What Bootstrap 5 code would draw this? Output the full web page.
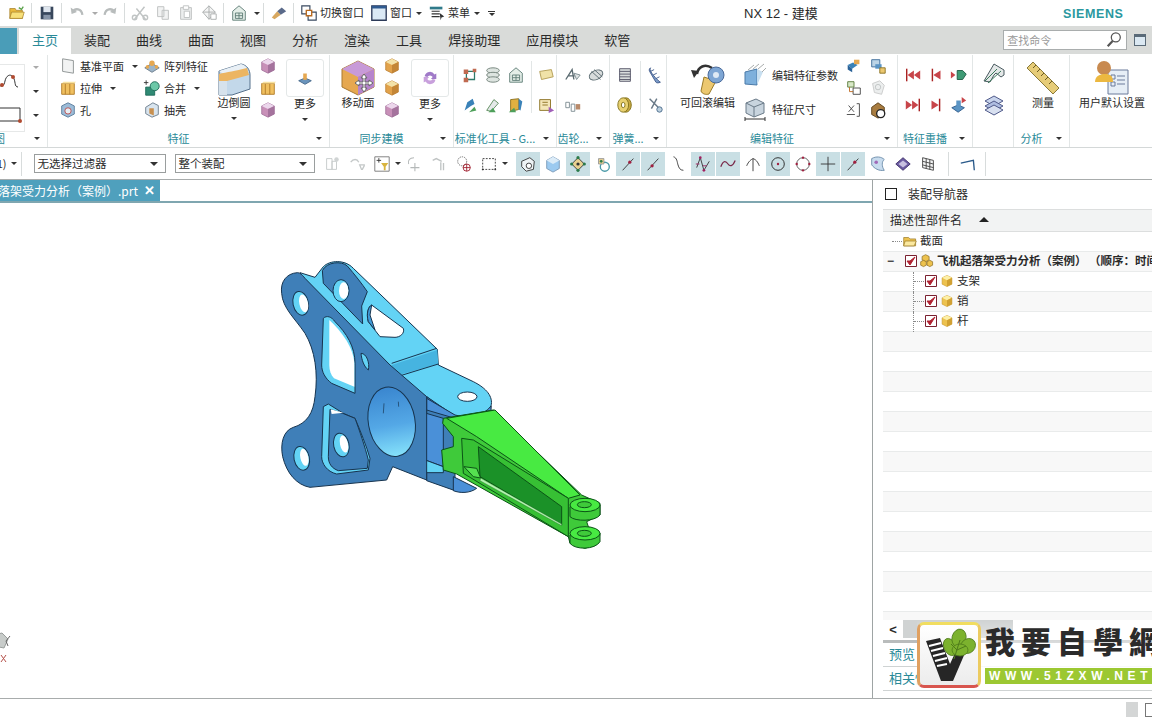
<!DOCTYPE html>
<html lang="zh-CN">
<head>
<meta charset="UTF-8" />
<title>NX 12 - 建模</title>
<link href="https://cdn.jsdelivr.net/npm/bootstrap@5.3.2/dist/css/bootstrap.min.css" rel="stylesheet" />
<style>
  html, body { height: 720px; overflow: hidden; }
  body { font-family: "Noto Sans CJK SC", "Liberation Sans", sans-serif; font-size: 11px; color: #2a2a2a; background: #fff; line-height: 1; }
  svg { display: block; flex: none; }
  .ic { width: 18px; height: 18px; }
  .ic-lg { width: 36px; height: 36px; }
  .ic-mid { width: 24px; height: 24px; }
  .tint-b { --a: #bcd8ee; --b: #5b94c8; --c: #2f6ea8; }
  .tint-o { --a: #f3e2a8; --b: #e2a24a; --c: #b97c30; }
  .tint-p { --a: #ecd7ec; --b: #c890b8; --c: #9a6a94; }
  .tint-g { --a: #e4e6e6; --b: #b6bcbc; --c: #8c9494; }
  .tint-y { --a: #fdf0a8; --b: #edc24e; --c: #c8952a; }

  .title-bar { height: 26px; padding-left: 5px; flex: none; }
  .qb { width: 23px; height: 24px; display: flex; align-items: center; justify-content: center; flex: none; }
  .qsep { width: 1px; height: 20px; background: #d8dcdc; margin: 0 3px; flex: none; }
  .cr { width: 0; height: 0; border-left: 3px solid transparent; border-right: 3px solid transparent; border-top: 3px solid #333; flex: none; }
  .cr-l { border-top-color: #aaa; }
  .qt { font-size: 11px; white-space: nowrap; flex: none; padding-bottom: 2px; }
  .more-ln { width: 7px; border-top: 1px solid #333; padding-top: 1px; margin-left: 8px; display: flex; justify-content: center; flex: none; }
  .app-name { font-family: "Liberation Sans", "Noto Sans CJK SC", sans-serif; font-size: 13px; width: 74px; margin-left: 249px; white-space: nowrap; flex: none; }
  .brand { font-family: "Liberation Sans", sans-serif; font-weight: 700; font-size: 12.5px; letter-spacing: .6px; color: #2a98a0; margin-left: 245px; margin-top: 3px; flex: none; }

  .tab-bar { height: 28px; background: #d9dbd9; flex: none; }
  .blue-tab { width: 17px; height: 26px; margin-top: 2px; background: #4a9db8; margin-right: 2px; flex: none; }
  .rtab { padding: 0 13px 3px; font-size: 13px; height: 26px; margin-top: 2px; flex: none; }
  .rtab-on { background: #fff; color: #2a8a98; }
  .find-box { width: 124px; height: 20px; background: #fff; border: 1px solid #a9adad; padding: 0 3px; color: #9a9a9a; margin-left: 360px; flex: none; }
  .win-btn { width: 12px; height: 12px; border: 1px solid #5a6a78; border-top-width: 3px; background: #dbe8f2; margin-left: 7px; flex: none; }

  .ribbon { height: 94px; border-bottom: 1px solid #d4d8d8; flex: none; }
  .rg { display: flex; flex-direction: column; flex: none; border-right: 1px solid #e2e6e6; height: 92px; margin-top: 1px; }
  .rg-body { flex: 1; display: flex; min-height: 0; }
  .rg-foot { height: 16px; margin-bottom: 1px; display: flex; align-items: center; color: #2a8a98; font-size: 11px; white-space: nowrap; overflow: hidden; flex: none; }
  .rg-foot span { flex: 1; text-align: center; }
  .rg-foot i { width: 20px; display: flex; justify-content: center; flex: none; }
  .foot-clip { margin-left: -6px; flex: none !important; }
  .foot-fill { flex: 1; }
  .rw3 { height: 22px; display: flex; align-items: center; white-space: nowrap; }
  .rw3 .ic { margin-right: 3px; }
  .stack3 { display: flex; flex-direction: column; flex: none; }
  .stack2 { display: flex; flex-direction: column; padding-top: 5px; flex: none; }
  .stack34 { display: flex; flex-direction: column; padding-top: 3px; flex: none; }
  .rw34 { height: 34px; display: flex; align-items: center; white-space: nowrap; }
  .rw34 svg { margin-right: 5px; }
  .rw2 { height: 30px; display: flex; align-items: center; justify-content: center; width: 23px; }
  .bigb { display: flex; flex-direction: column; align-items: center; padding-top: 5px; white-space: nowrap; flex: none; }
  .bigb b { font-weight: 400; height: 14px; margin-top: -1px; line-height: 14px; }
  .bigb .cr { margin-top: 8px; }
  .more-box { width: 38px; height: 38px; border: 1px solid #e4e8e8; border-radius: 3px; display: flex; align-items: center; justify-content: center; margin-top: -1px; }
  .vs { width: 1px; height: 52px; background: #e2e6e6; margin: 6px 2px 0 4px; flex: none; }
  .sk-frame { width: 25px; height: 68px; border: 1px solid #e6e8e8; border-left: 0; margin-top: 9px; display: flex; flex-direction: column; justify-content: space-around; overflow: hidden; flex: none; }
  .sk-arrows { width: 20px; display: flex; flex-direction: column; align-items: center; padding-top: 11px; gap: 21px; margin-left: 1px; }
  .w-11 { margin-left: 11px; } .w-10 { margin-left: 10px; } .w-7 { margin-left: 7px; } .w-6 { margin-left: 6px; }
  .w-3 { margin-left: 3px; } .w-13 { margin-left: 13px; } .w-8 { margin-left: 8px; } .w-9 { margin-left: 9px; }

  .sel-bar { height: 32px; border-bottom: 1px solid #a8acac; flex: none; }
  .clip-txt { margin-left: -7px; font-size: 11px; flex: none; }
  .combo { height: 19px; border: 1px solid #9a9e9e; padding: 0 3px; font-size: 11.5px; display: flex; align-items: center; justify-content: space-between; background: #fff; flex: none; }
  .combo .cr { border-left-width: 4px; border-right-width: 4px; border-top-width: 4px; margin-right: 4px; }
  .combo-a { width: 132px; margin-left: 10px; }
  .combo-b { width: 140px; margin: 0 5px 0 9px; }
  .sb { width: 24px; height: 24px; margin-right: 1px; display: flex; align-items: center; justify-content: center; flex: none; }
  .sb-on { background: #c9dfe4; }
  .sb-w { width: 7px; margin-right: 0; }
  .sb-gap { width: 7px; flex: none; }
  .sb-sep { width: 1px; height: 24px; background: #d8dcdc; margin: 0 7px; flex: none; }
  .sb-sep0 { width: 1px; height: 24px; background: #d8dcdc; margin: 0 2px 0 4px; flex: none; }

  .main-row { height: 518px; flex: none; }
  .view-wrap { width: 873px; border-right: 1px solid #9ea4a4; height: 518px; flex: none; }
  .doc-tabs { height: 23px; border-bottom: 2px solid #7fa6b0; flex: none; }
  .doc-tab { width: 160px; height: 21px; background: #4fa0bd; color: #fff; font-size: 12px; padding-right: 5px; white-space: nowrap; overflow: hidden; }
  .doc-tab span { flex: none; }
  .doc-x { margin-left: 6px; font-family: "Liberation Sans", sans-serif; font-weight: 700; font-size: 13px; }
  .canvas-area { position: relative; flex: 1; }
  .part { position: absolute; left: 260px; top: 47px; width: 360px; height: 310px; }
  .triad { position: absolute; left: 0; top: 428px; width: 14px; height: 34px; }

  .nav-panel { width: 279px; height: 518px; padding-left: 10px; flex: none; }
  .nav-head { height: 29px; font-size: 12px; flex: none; padding-bottom: 1px; }
  .nav-square { width: 12px; height: 12px; border: 1px solid #222; margin: 0 11px 0 2px; flex: none; }
  .col-head { height: 23px; background: #f2f3f3; border-top: 1px solid #dcdede; border-bottom: 1px solid #dcdede; font-size: 12px; padding: 0 0 2px 7px; flex: none; }
  .tri-up { width: 0; height: 0; border-left: 5px solid transparent; border-right: 5px solid transparent; border-bottom: 5px solid #222; margin-left: 17px; flex: none; }
  .tree { height: 388px; background: repeating-linear-gradient(#fff 0 19px, #e9ebeb 19px 20px, #f8f8f8 20px 39px, #e9ebeb 39px 40px); overflow: hidden; flex: none; }
  .tree-row { height: 20px; font-size: 11.5px; white-space: nowrap; padding-bottom: 2px; }
  .tree-row .ic { width: 14px; height: 14px; margin-right: 3px; }
  .ck { width: 12px; height: 12px; margin-right: 3px; }
  .lvl-0 { margin-left: 9px; }
  .lvl-1 { padding-left: 4px; }
  .lvl-2 { margin-left: 30px; border-left: 1px dotted #8a8a8a; }
  .dot-h { border-top: 1px dotted #8a8a8a; flex: none; width: 10px; margin-right: 1px; }
  .tree-exp { font-size: 12px; width: 18px; color: #444; font-family: "Liberation Sans", sans-serif; flex: none; }
  .hscroll { height: 18px; background: #fff; flex: none; }
  .hscroll-btn { width: 20px; font-family: "Liberation Sans", sans-serif; font-weight: 700; font-size: 13px; text-align: center; }
  .hscroll-thumb { width: 110px; height: 18px; background: #d0d3d3; }
  .split-line { height: 3px; background: #b9bcbc; margin-top: 2px; flex: none; }
  .acc-row { height: 24px; border-bottom: 1px solid #cfd3d3; color: #2a8a98; font-size: 13px; padding: 0 0 2px 6px; flex: none; }

  .status-bar { height: 22px; border-top: 1px solid #a8acac; justify-content: flex-end; flex: none; }
  .st-chip { width: 12px; height: 15px; background: #d4d6d6; margin-right: 7px; }
  .st-win { width: 7px; height: 14px; border: 1px solid #777; border-right: 0; }

  .wm { position: absolute; left: 917px; top: 620px; width: 235px; height: 70px; overflow: hidden; background: linear-gradient(#ffffff00 0, #ffffffdd 60%); }
  .wm-logo { width: 64px; height: 66px; border-radius: 7px; border: 3px solid; border-color: #f1dd60 #eccb60 #d8554e #e0a060; background: linear-gradient(#fff, #ececec); margin-top: 2px; flex: none; }
  .wm-text { font-family: "Noto Sans CJK TC", sans-serif; font-weight: 900; font-size: 30px; letter-spacing: 6px; color: #2b2b2b; line-height: 36px; height: 40px; white-space: nowrap; margin-left: 4px; padding-top: 2px; }
  .wm-url { background: #9cc832; height: 16px; margin: 8px 0 0 4px; color: #fff; font-family: "Liberation Sans", sans-serif; font-weight: 700; font-size: 12px; letter-spacing: 4.6px; line-height: 16px; padding-left: 4px; white-space: nowrap; }
</style>
</head>
<body>

<svg width="0" height="0" class="position-absolute">
  <defs>
    <symbol id="cube" viewBox="0 0 20 20"><path d="M10 2l7 3.5v9L10 18l-7-3.5v-9z" fill="var(--b)" stroke="var(--c)" stroke-width=".8"/><path d="M10 2l7 3.5L10 9 3 5.5z" fill="var(--a)"/><path d="M10 9l7-3.5v9L10 18z" fill="var(--c)" opacity=".75"/></symbol>
    <symbol id="folder" viewBox="0 0 20 20"><path d="M2 5h6l1 2h7v9H2z" fill="#e9b93c" stroke="#a6802a" stroke-width=".8"/><path d="M4 9h14l-2 7H2z" fill="#f7e07a" stroke="#a6802a" stroke-width=".8"/><path d="M12 4l3 2 2-3" fill="none" stroke="#5aa24a" stroke-width="1.5"/></symbol>
    <symbol id="save" viewBox="0 0 20 20"><path d="M3 3h14v14H3z" fill="#38475c"/><path d="M6 3h8v6H6z" fill="#dfe6ee"/><path d="M6 12h8v5H6z" fill="#8795a8"/></symbol>
    <symbol id="undo" viewBox="0 0 20 20"><path d="M5 9c3-5 10-4 11 3" fill="none" stroke="#b8bcbc" stroke-width="2.5"/><path d="M3 4l1 7 6-2z" fill="#b8bcbc"/></symbol>
    <symbol id="redo" viewBox="0 0 20 20"><path d="M15 9c-3-5-10-4-11 3" fill="none" stroke="#b8bcbc" stroke-width="2.5"/><path d="M17 4l-1 7-6-2z" fill="#b8bcbc"/></symbol>
    <symbol id="cut" viewBox="0 0 20 20"><path d="M4 17L15 3M16 17L6 5" stroke="#c0c4c4" stroke-width="1.6" fill="none"/><circle cx="4" cy="15" r="2.5" fill="none" stroke="#c0c4c4" stroke-width="1.5"/><circle cx="16" cy="15" r="2.5" fill="none" stroke="#c0c4c4" stroke-width="1.5"/></symbol>
    <symbol id="copy" viewBox="0 0 20 20"><path d="M4 3h7v11H4zM9 7h7v10H9z" fill="#f2f3f3" stroke="#bcc0c0"/></symbol>
    <symbol id="paste" viewBox="0 0 20 20"><path d="M4 4h12v13H4z" fill="#eceeee" stroke="#bcc0c0"/><path d="M7 2h6v4H7zM8 8h6v7H8z" fill="#fff" stroke="#bcc0c0"/></symbol>
    <symbol id="touch" viewBox="0 0 20 20"><path d="M10 2l7 7-7 8-7-8z" fill="#f4f5f5" stroke="#a8acac"/><path d="M10 2v15M3 9h14" stroke="#a8acac"/><path d="M12 11h6v6h-6z" fill="#fff" stroke="#a8acac"/></symbol>
    <symbol id="gridbox" viewBox="0 0 20 20"><path d="M3 8l7-6 7 6v10H3z" fill="#e4eee8" stroke="#5c7a74"/><path d="M6 10h8v6H6zM10 10v6M6 13h8" fill="none" stroke="#5c7a74"/></symbol>
    <symbol id="wand" viewBox="0 0 20 20"><path d="M2 15l6-7 4 4-7 5z" fill="#d8a860"/><path d="M8 8l5-4 5 4-6 4z" fill="#5a6a8a"/></symbol>
    <symbol id="split" viewBox="0 0 20 20"><path d="M2 2h9v9H2zM9 9h9v9H9z" fill="#fff" stroke="#3a4a60" stroke-width="1.3"/><path d="M7 7h6v6H7z" fill="#fff" stroke="#b86a20" stroke-width="1.5"/></symbol>
    <symbol id="win" viewBox="0 0 20 20"><path d="M2 2h16v16H2z" fill="#dbe9f5" stroke="#2c3a58" stroke-width="1.5"/><path d="M2 2h16v3H2z" fill="#2f5a90"/></symbol>
    <symbol id="menu" viewBox="0 0 20 20"><path d="M2 3h14v3H2z" fill="#2f7a8a"/><path d="M4 8h9M4 11h9M4 14h9" stroke="#333" stroke-width="1.2"/><path d="M13 10l5 4-3 1-1 3z" fill="#333"/></symbol>
    <symbol id="plane" viewBox="0 0 20 20"><path d="M4 2l12 2v14L4 16z" fill="#f2f3f3" stroke="#8a9090"/></symbol>
    <symbol id="extrude" viewBox="0 0 20 20"><path d="M3 5h14v12H3z" fill="#f0c060" stroke="#b07a28"/><path d="M7 5v12M12 5v12" stroke="#b07a28"/><path d="M3 5l2-2h14l-2 2z" fill="#f8e2a0"/></symbol>
    <symbol id="hole" viewBox="0 0 20 20"><path d="M10 2l7 3.5v9L10 18l-7-3.5v-9z" fill="#9cbcd8" stroke="#5a7a9a"/><circle cx="10" cy="11" r="3.5" fill="#e8eef4" stroke="#b84a4a"/></symbol>
    <symbol id="pattern" viewBox="0 0 20 20"><path d="M2 12l8-5 8 5-8 5z" fill="#9cb4c8" stroke="#6a7a8a"/><circle cx="10" cy="7" r="3" fill="#e6a850"/><circle cx="5" cy="11" r="2" fill="#e6a850"/><circle cx="15" cy="11" r="2" fill="#e6a850"/></symbol>
    <symbol id="unite" viewBox="0 0 20 20"><path d="M3 9h10v9H3z" fill="#2f8a74" stroke="#1e6a58"/><circle cx="13" cy="8" r="5" fill="#6cc8a8" stroke="#1e6a58"/><path d="M1 4h5M3.5 1.5v5" stroke="#333"/></symbol>
    <symbol id="shell" viewBox="0 0 20 20"><path d="M3 7l8-5 6 3v10l-7 3-7-4z" fill="#d8e4ee" stroke="#6a7a8a"/><path d="M7 8h5v8l-5-2z" fill="#c89050"/></symbol>
    <symbol id="blend" viewBox="0 0 36 36"><path d="M3 11l22-7c6 1 9 6 9 11v14L16 35H3z" fill="#c3d8ea" stroke="#54708c"/><path d="M3 11l22-7c3 1 5 2 6 5L9 15z" fill="#e9f0f6"/><path d="M3 14c8-2 16-3 28-6l2 7-22 6H3z" fill="#ecb562"/><path d="M3 21h8v14H3z" fill="#d6e2ec"/></symbol>
    <symbol id="stamp" viewBox="0 0 20 20"><path d="M3 13l7-3 7 3-7 4z" fill="#6a94bc" stroke="#45688a"/><path d="M8 5h4v7H8z" fill="#e6a850"/></symbol>
    <symbol id="movef" viewBox="0 0 36 36"><path d="M18 1l16 8v18l-16 8-16-8V9z" fill="#e6a850" stroke="#a87830"/><path d="M18 1l16 8-16 8L2 9z" fill="#c89ad8"/><path d="M18 17l16-8v18l-16 8z" fill="#b684cc"/><path d="M24 14l3 4h-2v4h4v-2l4 3-4 3v-2h-4v4h2l-3 4-3-4h2v-4h-4v2l-4-3 4-3v2h4v-4h-2z" fill="#fff" stroke="#666"/></symbol>
    <symbol id="syncm" viewBox="0 0 20 20"><path d="M4 8a6 6 0 0 1 11-2l2-1v6h-6l2-2a3.5 3.5 0 0 0-6 0z" fill="#a07ac8"/><path d="M16 12a6 6 0 0 1-11 2l-2 1V9h6l-2 2a3.5 3.5 0 0 0 6 0z" fill="#c8a0dc"/></symbol>
    <symbol id="nodes" viewBox="0 0 20 20"><path d="M6 6h9v9H6z" fill="none" stroke="#2f7a6a" stroke-width="1.4"/><path d="M3 4h5v5H3zM13 3h4v4h-4zM3 13h5v5H3z" fill="#c06a50"/></symbol>
    <symbol id="layers" viewBox="0 0 20 20"><ellipse cx="10" cy="5" rx="7" ry="3" fill="#dde4e0" stroke="#708078"/><ellipse cx="10" cy="10" rx="7" ry="3" fill="#dde4e0" stroke="#708078"/><ellipse cx="10" cy="15" rx="7" ry="3" fill="#dde4e0" stroke="#708078"/></symbol>
    <symbol id="label" viewBox="0 0 20 20"><path d="M3 6l13-2 2 8-13 3z" fill="#f0e2a8" stroke="#b09a50"/></symbol>
    <symbol id="bluetool" viewBox="0 0 20 20"><path d="M4 16l3-9 6-4 2 6-4 2z" fill="#3a82b8"/><path d="M9 18l6-6 2 4z" fill="#4ea05a"/></symbol>
    <symbol id="greentool" viewBox="0 0 20 20"><path d="M3 16l8-12 5 4-8 9z" fill="#e4e8e8" stroke="#5a8a5a"/><path d="M5 18l5-5 3 5z" fill="#4ea05a"/></symbol>
    <symbol id="yb" viewBox="0 0 20 20"><path d="M4 4l9-1v12l-9 2z" fill="#e0b040" stroke="#8a7020"/><path d="M13 3l4 3-2 10-2-1z" fill="#3a82b8"/><path d="M2 18l6-5 2 5z" fill="#4ea05a"/></symbol>
    <symbol id="mix" viewBox="0 0 20 20"><path d="M3 4h12v12H3z" fill="#f4e6b8" stroke="#8a7020"/><path d="M6 7h6M6 10h6" stroke="#8a7020"/><path d="M13 12l6 4-6 3z" fill="#a060b8"/></symbol>
    <symbol id="a-script" viewBox="0 0 20 20"><path d="M2 15L9 4l2 11M5 11h7" fill="none" stroke="#5a6a70" stroke-width="1.5"/><path d="M11 8l7 2-4 5z" fill="#dfe4e4" stroke="#7a8a90"/></symbol>
    <symbol id="gear-tilt" viewBox="0 0 20 20"><ellipse cx="10" cy="10" rx="8" ry="5" transform="rotate(-25 10 10)" fill="#d8dcdc" stroke="#5a6a70"/><path d="M5 6l10 9M8 4l9 8" stroke="#5a6a70"/></symbol>
    <symbol id="pinset" viewBox="0 0 20 20"><path d="M2 7h4v6H2zM8 9h4v8H8z" fill="none" stroke="#7a8a90"/><path d="M13 9h5v6h-5z" fill="#b88a6a"/></symbol>
    <symbol id="spring" viewBox="0 0 20 20"><path d="M4 3h12v14H4z" fill="#d8dcdc" stroke="#556"/><path d="M4 6h12M4 9h12M4 12h12M4 15h12" stroke="#556"/></symbol>
    <symbol id="spring2" viewBox="0 0 20 20"><path d="M5 2c-3 3 8 14 11 16-2 1-4 1-5 0L4 6c-1-2 0-3 1-4z" fill="#7a9ac8" stroke="#405a8a"/><path d="M5 6l4-2M8 10l4-2M11 14l4-2" stroke="#405a8a"/></symbol>
    <symbol id="washer" viewBox="0 0 20 20"><ellipse cx="11" cy="10" rx="6" ry="8" fill="#c8a840" stroke="#80701a"/><ellipse cx="8" cy="10" rx="6" ry="8" fill="#e8d070" stroke="#80701a"/><ellipse cx="8" cy="10" rx="2" ry="3" fill="#fff" stroke="#80701a"/></symbol>
    <symbol id="snips" viewBox="0 0 20 20"><path d="M4 3l12 12M12 3L6 14" stroke="#6a7a88" stroke-width="1.6" fill="none"/><circle cx="15" cy="15" r="3" fill="#bcd0de" stroke="#4a6a8a"/></symbol>
    <symbol id="rollback" viewBox="0 0 36 36"><path d="M22 8c-7-5-14-1-15 6" fill="none" stroke="#333" stroke-width="2.5"/><path d="M1 10l8 1-5 7z" fill="#333"/><path d="M14 17l12 4-7 13c-3 1-7 0-8-3z" fill="#ecc870" stroke="#9a7a28"/><circle cx="26" cy="15" r="8" fill="#7ea6d4" stroke="#4a6a9a"/><circle cx="26" cy="15" r="3" fill="#dfeaf5"/></symbol>
    <symbol id="editpar" viewBox="0 0 24 24"><path d="M2 9l12-3v16L2 21z" fill="#7eb0dc" stroke="#4a7aa8"/><path d="M14 6l6 3-6 13z" fill="#c8dff0"/><path d="M5 7l6-5M10 6l6-5M15 6l6-5M19 9l4-4" stroke="#a8acac"/></symbol>
    <symbol id="editdim" viewBox="0 0 24 24"><path d="M3 6l10-4 8 4v10l-10 4-8-4z" fill="#c8d4de" stroke="#6a7a88"/><path d="M11 10l10-4M11 10v10M3 6l8 4" stroke="#6a7a88"/><path d="M2 22h20M2 20v4M22 20v4" stroke="#333"/></symbol>
    <symbol id="chain" viewBox="0 0 20 20"><path d="M3 9l6-3 5 3-6 4z" fill="#3a82b8"/><path d="M3 9v5l5 3v-4z" fill="#2a6298"/><path d="M10 3h6v5h-6z" fill="#e6a850"/></symbol>
    <symbol id="chainlk" viewBox="0 0 20 20"><path d="M3 3h9v8H3z" fill="#bcd4e6" stroke="#3a6a98"/><path d="M7 8h7v5H7z" fill="#5a94c4"/><path d="M12 12h6v6h-6z" fill="#ecc870" stroke="#8a7020"/></symbol>
    <symbol id="frames" viewBox="0 0 20 20"><path d="M3 3h7v6H3z" fill="#d8e8c8" stroke="#5a7a3a"/><path d="M9 10h8v7H9z" fill="#fff" stroke="#444"/><path d="M5 9v5h4" fill="none" stroke="#c06a20"/></symbol>
    <symbol id="ghost" viewBox="0 0 20 20"><path d="M4 5l8-3 5 5-3 10-8-2z" fill="#eceeee" stroke="#c8caca"/><circle cx="10" cy="9" r="3" fill="none" stroke="#c0c4c4"/></symbol>
    <symbol id="xdim" viewBox="0 0 20 20"><path d="M4 5l6 7M10 5l-6 7M2 15h9M13 3h3v14h-3" fill="none" stroke="#444"/></symbol>
    <symbol id="brownc" viewBox="0 0 20 20"><path d="M3 7l7-5 7 5v8l-7 4-7-4z" fill="#a87c40" stroke="#5a4018"/><circle cx="13" cy="14" r="4.5" fill="#fff" stroke="#222" stroke-width="1.5"/></symbol>
    <symbol id="rwd2" viewBox="0 0 20 20"><path d="M3 3v14" stroke="#a22" stroke-width="1.6"/><path d="M11 5v10L4 10zM18 5v10l-7-5z" fill="#c8454a"/></symbol>
    <symbol id="rwd1" viewBox="0 0 20 20"><path d="M6 3v14" stroke="#a22" stroke-width="1.6"/><path d="M15 5v10L7 10z" fill="#c8454a"/></symbol>
    <symbol id="fwdb" viewBox="0 0 20 20"><path d="M1 6v8l5-4z" fill="#c8454a"/><path d="M8 5h6l4 4-4 6H8z" fill="#3e9a74" stroke="#1e5a44"/></symbol>
    <symbol id="fwd2" viewBox="0 0 20 20"><path d="M17 3v14" stroke="#a22" stroke-width="1.6"/><path d="M2 5v10l7-5zM9 5v10l7-5z" fill="#c8454a"/></symbol>
    <symbol id="fwd1" viewBox="0 0 20 20"><path d="M14 3v14" stroke="#a22" stroke-width="1.6"/><path d="M5 5v10l8-5z" fill="#c8454a"/></symbol>
    <symbol id="fwdc" viewBox="0 0 20 20"><path d="M2 13l7-3 7 3-7 5z" fill="#5a94c4" stroke="#2f5a8a"/><path d="M7 5h5v7H7z" fill="#5a94c4"/><path d="M13 1v7l5-3z" fill="#c8454a"/></symbol>
    <symbol id="rule1" viewBox="0 0 24 24"><path d="M12 1l10 6v5l-3 2-5-4-2 2-4 7-6-1z" fill="#e4e8e8" stroke="#4a5a60"/><path d="M3 18L15 6M6 20L19 8" stroke="#3a7a5a"/></symbol>
    <symbol id="stackb" viewBox="0 0 24 24"><path d="M3 8l9-5 9 5-9 5z" fill="#c8d4ec" stroke="#505a8a"/><path d="M3 13l9-5 9 5-9 5z" fill="#aebde0" stroke="#505a8a"/><path d="M3 17l9-5 9 5-9 5z" fill="#d8e0f0" stroke="#505a8a"/></symbol>
    <symbol id="ruler" viewBox="0 0 36 36"><path d="M2 8l6-6 26 26-6 6z" fill="#e6cc78" stroke="#8a7a3a"/><path d="M8 8l3-3M12 12l3-3M16 16l3-3M20 20l3-3M24 24l3-3" stroke="#6a5a20"/></symbol>
    <symbol id="usrset" viewBox="0 0 36 36"><path d="M14 10h20v24H14z" fill="#e6eef6" stroke="#6a7a9a"/><path d="M17 15h4v4h-4zM17 22h4v4h-4zM23 16h8M23 24h8M23 20h8" fill="none" stroke="#6a7a9a"/><circle cx="10" cy="8" r="7" fill="#c88a50"/><path d="M1 22c0-6 5-8 10-8s8 2 8 8z" fill="#ecb840"/></symbol>
    <symbol id="mag" viewBox="0 0 20 20"><circle cx="12" cy="7" r="5" fill="#fff" stroke="#555" stroke-width="1.4"/><path d="M8.5 11L3 17" stroke="#555" stroke-width="2.4"/></symbol>
    <symbol id="check" viewBox="0 0 12 12"><path d="M.5.5h11v11H.5z" fill="#fff" stroke="#7a2030"/><path d="M2 6l3 4 5-8-5 4z" fill="#b02030" stroke="#b02030"/></symbol>
    <symbol id="sk-curve" viewBox="0 0 24 20"><path d="M-2 12c4 4 6 2 7-3s5-8 8-4 1 10 5 10" fill="none" stroke="#333"/><circle cx="2" cy="13" r="2" fill="#b04a30"/><circle cx="13" cy="5" r="2" fill="#b04a30"/></symbol>
    <symbol id="sk-rect" viewBox="0 0 24 20"><path d="M-2 3h22v13H-2" fill="none" stroke="#333"/><circle cx="20" cy="16" r="2" fill="#b04a30"/></symbol>
    <symbol id="s-line" viewBox="0 0 20 20"><path d="M4 17L16 4" stroke="#333"/><circle cx="12" cy="8" r="1.8" fill="#a02040"/></symbol>
    <symbol id="s-line2" viewBox="0 0 20 20"><path d="M4 17L16 4" stroke="#333"/><circle cx="9" cy="12" r="1.8" fill="#a02040"/></symbol>
    <symbol id="s-curve" viewBox="0 0 20 20"><path d="M5 2c4 1 4 6 5 9s2 6 6 6" fill="none" stroke="#333"/></symbol>
    <symbol id="s-zig" viewBox="0 0 20 20"><path d="M3 14L7 3l4 14 6-10" fill="none" stroke="#333"/><path d="M2 10h4M10 12h4" stroke="#a02060"/><circle cx="7" cy="3" r="1.5" fill="#a02060"/><circle cx="11" cy="17" r="1.5" fill="#a02060"/></symbol>
    <symbol id="s-wave" viewBox="0 0 20 20"><path d="M2 13c3-8 6-6 8-3s5 3 8-4" fill="none" stroke="#7a2a4a" stroke-width="1.4"/></symbol>
    <symbol id="s-arc" viewBox="0 0 20 20"><path d="M10 4v14M3 12c2-5 5-7 7-8 3 1 5 3 7 8" fill="none" stroke="#333"/></symbol>
    <symbol id="s-circ" viewBox="0 0 20 20"><circle cx="10" cy="10" r="7" fill="none" stroke="#222"/><circle cx="10" cy="10" r="1.3" fill="#a02040"/></symbol>
    <symbol id="s-circ2" viewBox="0 0 20 20"><circle cx="10" cy="10" r="7" fill="none" stroke="#555"/><circle cx="10" cy="3" r="1.3" fill="#a02040"/><circle cx="10" cy="17" r="1.3" fill="#a02040"/><circle cx="3" cy="10" r="1.3" fill="#a02040"/><circle cx="17" cy="10" r="1.3" fill="#a02040"/></symbol>
    <symbol id="s-plus" viewBox="0 0 20 20"><path d="M10 2v16M2 10h16" stroke="#333"/></symbol>
    <symbol id="s-surf" viewBox="0 0 20 20"><path d="M3 4c5-3 11-2 14 1-3 2-3 8 0 12-6 1-11-2-14-6z" fill="#c8dcee" stroke="#6a8aa8"/><circle cx="8" cy="8" r="2" fill="#a06ab8"/></symbol>
    <symbol id="s-dia" viewBox="0 0 20 20"><path d="M10 3l8 7-8 7-8-7z" fill="#6a5aa0" stroke="#40306a"/><path d="M5 10l5-4 5 4-5 4z" fill="#c8c0e0"/></symbol>
    <symbol id="s-mesh" viewBox="0 0 20 20"><path d="M4 3l12 3v11L4 14zM8 4v11M12 5v11M4 7l12 3M4 11l12 3" fill="#f4f5f5" stroke="#444"/></symbol>
    <symbol id="s-hook" viewBox="0 0 20 20"><path d="M2 9l14-3 1 11" fill="none" stroke="#2a5a8a" stroke-width="1.5"/></symbol>
    <symbol id="s-g1" viewBox="0 0 20 20"><path d="M4 4h6v12H4zM10 7h5v9h-5z" fill="none" stroke="#c4c8c8"/><circle cx="15" cy="5" r="2.5" fill="#d0d4d4"/></symbol>
    <symbol id="s-g2" viewBox="0 0 20 20"><path d="M3 8c3-4 7-4 9 0M13 11h5v1l-2 4h-1z" fill="none" stroke="#c4c8c8" stroke-width="1.5"/></symbol>
    <symbol id="s-filt" viewBox="0 0 20 20"><path d="M2 2h16v16H2z" fill="#fff" stroke="#777"/><path d="M4 6h5M6.5 3.5v5" stroke="#333"/><path d="M9 9h8l-3 4v4h-2v-4z" fill="#d8b440"/></symbol>
    <symbol id="s-g3" viewBox="0 0 20 20"><path d="M10 3c-5 0-7 3-6 7M11 9v9M6 14h10" fill="none" stroke="#b4b8b8" stroke-width="1.2"/></symbol>
    <symbol id="s-g4" viewBox="0 0 20 20"><path d="M3 6l4-2 6 3M12 8v9M15 9v8" fill="none" stroke="#c0c4c4" stroke-width="1.5"/></symbol>
    <symbol id="s-crossb" viewBox="0 0 20 20"><circle cx="8" cy="7" r="5" fill="none" stroke="#666" stroke-dasharray="1.5 1"/><circle cx="13" cy="14" r="4" fill="none" stroke="#a02030"/><path d="M9 14h8M13 10v8" stroke="#a02030"/></symbol>
    <symbol id="s-dash" viewBox="0 0 20 20"><path d="M3 4h14v12H3z" fill="none" stroke="#333" stroke-dasharray="2 1.5"/><circle cx="3" cy="16" r="1" fill="#333"/><circle cx="17" cy="16" r="1" fill="#333"/></symbol>
    <symbol id="s-cbox" viewBox="0 0 20 20"><path d="M3 7l9-4 5 4-1 9-8 2-5-5z" fill="#eef3f5" stroke="#333"/><circle cx="11" cy="12" r="3" fill="#fff" stroke="#333"/></symbol>
    <symbol id="s-cblue" viewBox="0 0 20 20"><path d="M3 6l7-4 7 4v9l-7 4-7-4z" fill="#9ccaf0" stroke="#7a9ab8"/><path d="M3 6l7 4 7-4-7-4z" fill="#dcecf8"/></symbol>
    <symbol id="s-nodesg" viewBox="0 0 20 20"><path d="M10 3l7 7-7 7-7-7z" fill="#e8d090" stroke="#333"/><circle cx="10" cy="3" r="1.8" fill="#2a7a4a"/><circle cx="3" cy="10" r="1.8" fill="#2a7a4a"/><circle cx="17" cy="10" r="1.8" fill="#2a7a4a"/><circle cx="10" cy="17" r="1.8" fill="#2a7a4a"/><circle cx="10" cy="10" r="1.8" fill="#333"/></symbol>
    <symbol id="s-nodesb" viewBox="0 0 20 20"><circle cx="12" cy="13" r="5" fill="none" stroke="#4a9aa8" stroke-width="1.5"/><path d="M5 4h6v6H5z" fill="#e8d090" stroke="#999"/><circle cx="8" cy="7" r="1.5" fill="#2a7a4a"/></symbol>
    <symbol id="t-folder" viewBox="0 0 20 20"><path d="M1 5h7l2 2h8v10H1z" fill="#edc24e" stroke="#9a7a28"/><path d="M3 10h16l-3 7H1z" fill="#fbe9a0" stroke="#9a7a28"/></symbol>
    <symbol id="t-asm" viewBox="0 0 20 20"><path d="M8 1l5 2.5v5L8 11 3 8.5v-5z" fill="#edc24e" stroke="#8a6a20"/><path d="M5 9l4 2v5l-4 2-4-2v-5z" fill="#edc24e" stroke="#8a6a20"/><path d="M14 9l4 2v5l-4 2-4-2v-5z" fill="#edc24e" stroke="#8a6a20"/></symbol>
  </defs>
</svg>

<div class="d-flex flex-column">

  <!-- title bar -->
  <div class="title-bar d-flex align-items-center">
    <div class="qb"><svg class="ic"><use href="#folder"/></svg></div>
    <div class="qsep"></div>
    <div class="qb"><svg class="ic"><use href="#save"/></svg></div>
    <div class="qsep"></div>
    <div class="qb"><svg class="ic"><use href="#undo"/></svg></div>
    <div class="cr cr-l ms-1"></div>
    <div class="qb"><svg class="ic"><use href="#redo"/></svg></div>
    <div class="qsep"></div>
    <div class="qb"><svg class="ic"><use href="#cut"/></svg></div>
    <div class="qb"><svg class="ic"><use href="#copy"/></svg></div>
    <div class="qb"><svg class="ic"><use href="#paste"/></svg></div>
    <div class="qb"><svg class="ic"><use href="#touch"/></svg></div>
    <div class="qsep"></div>
    <div class="qb"><svg class="ic"><use href="#gridbox"/></svg></div>
    <div class="cr ms-1"></div>
    <div class="qsep"></div>
    <div class="qb"><svg class="ic"><use href="#wand"/></svg></div>
    <div class="qsep"></div>
    <div class="qb"><svg class="ic"><use href="#split"/></svg></div>
    <div class="qt">切换窗口</div>
    <div class="qb w-3"><svg class="ic"><use href="#win"/></svg></div>
    <div class="qt">窗口</div>
    <div class="cr ms-1"></div>
    <div class="qb w-3"><svg class="ic"><use href="#menu"/></svg></div>
    <div class="qt">菜单</div>
    <div class="cr ms-1"></div>
    <div class="more-ln"><div class="cr"></div></div>
    <div class="app-name">NX 12 - 建模</div>
    <div class="brand">SIEMENS</div>
  </div>

  <!-- ribbon tabs -->
  <div class="tab-bar d-flex align-items-center">
    <div class="blue-tab"></div>
    <div class="rtab rtab-on d-flex align-items-center">主页</div>
    <div class="rtab d-flex align-items-center">装配</div>
    <div class="rtab d-flex align-items-center">曲线</div>
    <div class="rtab d-flex align-items-center">曲面</div>
    <div class="rtab d-flex align-items-center">视图</div>
    <div class="rtab d-flex align-items-center">分析</div>
    <div class="rtab d-flex align-items-center">渲染</div>
    <div class="rtab d-flex align-items-center">工具</div>
    <div class="rtab d-flex align-items-center">焊接助理</div>
    <div class="rtab d-flex align-items-center">应用模块</div>
    <div class="rtab d-flex align-items-center">软管</div>
    <div class="find-box d-flex align-items-center justify-content-between">查找命令<svg class="ic"><use href="#mag"/></svg></div>
    <div class="win-btn"></div>
  </div>

  <!-- ribbon -->
  <div class="ribbon d-flex">
    <div class="rg" style="width:48px">
      <div class="rg-body">
        <div class="sk-frame"><svg width="24" height="20"><use href="#sk-curve"/></svg><svg width="24" height="20"><use href="#sk-rect"/></svg></div>
        <div class="sk-arrows"><div class="cr cr-l"></div><div class="cr"></div><div class="cr"></div></div>
      </div>
      <div class="rg-foot"><span class="foot-clip">图</span><div class="foot-fill"></div><i><div class="cr"></div></i></div>
    </div>

    <div class="rg" style="width:282px">
      <div class="rg-body">
        <div class="stack3 w-11" style="width:84px">
          <div class="rw3"><svg class="ic"><use href="#plane"/></svg>基准平面<div class="cr ms-2"></div></div>
          <div class="rw3"><svg class="ic"><use href="#extrude"/></svg>拉伸<div class="cr ms-2"></div></div>
          <div class="rw3"><svg class="ic"><use href="#hole"/></svg>孔</div>
        </div>
        <div class="stack3" style="width:67px">
          <div class="rw3"><svg class="ic"><use href="#pattern"/></svg>阵列特征</div>
          <div class="rw3"><svg class="ic"><use href="#unite"/></svg>合并<div class="cr ms-2"></div></div>
          <div class="rw3"><svg class="ic"><use href="#shell"/></svg>抽壳</div>
        </div>
        <div class="bigb w-6"><svg class="ic-lg"><use href="#blend"/></svg><b>边倒圆</b><div class="cr"></div></div>
        <div class="stack3 w-7">
          <div class="rw3"><svg class="ic tint-p"><use href="#cube"/></svg></div>
          <div class="rw3"><svg class="ic tint-o"><use href="#extrude"/></svg></div>
          <div class="rw3"><svg class="ic tint-p"><use href="#cube"/></svg></div>
        </div>
        <div class="bigb w-6"><div class="more-box"><svg class="ic"><use href="#stamp"/></svg></div><b>更多</b><div class="cr"></div></div>
      </div>
      <div class="rg-foot"><span>特征</span><i><div class="cr"></div></i></div>
    </div>

    <div class="rg" style="width:124px">
      <div class="rg-body">
        <div class="bigb w-10"><svg class="ic-lg"><use href="#movef"/></svg><b>移动面</b></div>
        <div class="stack3 w-7">
          <div class="rw3"><svg class="ic tint-o"><use href="#cube"/></svg></div>
          <div class="rw3"><svg class="ic tint-o"><use href="#cube"/></svg></div>
          <div class="rw3"><svg class="ic tint-p"><use href="#cube"/></svg></div>
        </div>
        <div class="bigb w-7"><div class="more-box"><svg class="ic"><use href="#syncm"/></svg></div><b>更多</b><div class="cr"></div></div>
      </div>
      <div class="rg-foot"><span>同步建模</span><i><div class="cr"></div></i></div>
    </div>

    <div class="rg" style="width:103px">
      <div class="rg-body">
        <div class="stack2 ms-1"><div class="rw2"><svg class="ic"><use href="#nodes"/></svg></div><div class="rw2"><svg class="ic"><use href="#bluetool"/></svg></div></div>
        <div class="stack2"><div class="rw2"><svg class="ic"><use href="#layers"/></svg></div><div class="rw2"><svg class="ic"><use href="#greentool"/></svg></div></div>
        <div class="stack2"><div class="rw2"><svg class="ic"><use href="#gridbox"/></svg></div><div class="rw2"><svg class="ic"><use href="#yb"/></svg></div></div>
        <div class="vs"></div>
        <div class="stack2"><div class="rw2"><svg class="ic"><use href="#label"/></svg></div><div class="rw2"><svg class="ic"><use href="#mix"/></svg></div></div>
      </div>
      <div class="rg-foot"><span>标准化工具 - G...</span><i><div class="cr"></div></i></div>
    </div>

    <div class="rg" style="width:53px">
      <div class="rg-body">
        <div class="stack2 ms-1"><div class="rw2"><svg class="ic"><use href="#a-script"/></svg></div><div class="rw2"><svg class="ic"><use href="#pinset"/></svg></div></div>
        <div class="stack2"><div class="rw2"><svg class="ic"><use href="#gear-tilt"/></svg></div></div>
      </div>
      <div class="rg-foot"><span>齿轮...</span><i><div class="cr"></div></i></div>
    </div>

    <div class="rg" style="width:57px">
      <div class="rg-body">
        <div class="stack2 w-3"><div class="rw2"><svg class="ic"><use href="#spring"/></svg></div><div class="rw2"><svg class="ic"><use href="#washer"/></svg></div></div>
        <div class="vs"></div>
        <div class="stack2"><div class="rw2"><svg class="ic"><use href="#spring2"/></svg></div><div class="rw2"><svg class="ic"><use href="#snips"/></svg></div></div>
      </div>
      <div class="rg-foot"><span>弹簧...</span><i><div class="cr"></div></i></div>
    </div>

    <div class="rg" style="width:231px">
      <div class="rg-body">
        <div class="bigb w-13"><svg class="ic-lg"><use href="#rollback"/></svg><b>可回滚编辑</b></div>
        <div class="stack34 w-8" style="width:94px">
          <div class="rw34"><svg class="ic-mid"><use href="#editpar"/></svg>编辑特征参数</div>
          <div class="rw34"><svg class="ic-mid"><use href="#editdim"/></svg>特征尺寸</div>
        </div>
        <div class="stack3 w-8">
          <div class="rw3"><svg class="ic"><use href="#chain"/></svg></div>
          <div class="rw3"><svg class="ic"><use href="#frames"/></svg></div>
          <div class="rw3"><svg class="ic"><use href="#xdim"/></svg></div>
        </div>
        <div class="stack3 w-3">
          <div class="rw3"><svg class="ic"><use href="#chainlk"/></svg></div>
          <div class="rw3"><svg class="ic"><use href="#ghost"/></svg></div>
          <div class="rw3"><svg class="ic"><use href="#brownc"/></svg></div>
        </div>
      </div>
      <div class="rg-foot"><span>编辑特征</span><i><div class="cr"></div></i></div>
    </div>

    <div class="rg" style="width:75px">
      <div class="rg-body">
        <div class="stack2 w-3"><div class="rw2"><svg class="ic"><use href="#rwd2"/></svg></div><div class="rw2"><svg class="ic"><use href="#fwd2"/></svg></div></div>
        <div class="stack2"><div class="rw2"><svg class="ic"><use href="#rwd1"/></svg></div><div class="rw2"><svg class="ic"><use href="#fwd1"/></svg></div></div>
        <div class="stack2"><div class="rw2"><svg class="ic"><use href="#fwdb"/></svg></div><div class="rw2"><svg class="ic"><use href="#fwdc"/></svg></div></div>
      </div>
      <div class="rg-foot"><span>特征重播</span><i><div class="cr"></div></i></div>
    </div>

    <div class="rg" style="width:41px">
      <div class="rg-body">
        <div class="stack2 w-9"><div class="rw2"><svg class="ic-mid"><use href="#rule1"/></svg></div><div class="rw2"><svg class="ic-mid"><use href="#stackb"/></svg></div></div>
      </div>
    </div>

    <div class="rg" style="width:56px">
      <div class="rg-body">
        <div class="bigb w-11"><svg class="ic-lg"><use href="#ruler"/></svg><b>测量</b></div>
      </div>
      <div class="rg-foot"><span>分析</span><i><div class="cr"></div></i></div>
    </div>

    <div class="rg border-0" style="width:82px">
      <div class="rg-body">
        <div class="bigb w-9"><svg class="ic-lg"><use href="#usrset"/></svg><b>用户默认设置</b></div>
      </div>
    </div>
  </div>

  <!-- selection bar -->
  <div class="sel-bar d-flex align-items-center">
    <div class="clip-txt">(1)</div>
    <div class="cr ms-1"></div>
    <div class="sb-sep0"></div>
    <div class="combo combo-a">无选择过滤器<div class="cr"></div></div>
    <div class="combo combo-b">整个装配<div class="cr"></div></div>
    <div class="sb"><svg class="ic"><use href="#s-g1"/></svg></div>
    <div class="sb"><svg class="ic"><use href="#s-g2"/></svg></div>
    <div class="sb"><svg class="ic"><use href="#s-filt"/></svg></div>
    <div class="sb sb-w"><div class="cr"></div></div>
    <div class="sb"><svg class="ic"><use href="#s-g3"/></svg></div>
    <div class="sb"><svg class="ic"><use href="#s-g4"/></svg></div>
    <div class="sb"><svg class="ic"><use href="#s-crossb"/></svg></div>
    <div class="sb"><svg class="ic"><use href="#s-dash"/></svg></div>
    <div class="sb sb-w"><div class="cr"></div></div>
    <div class="sb-gap"></div>
    <div class="sb sb-on"><svg class="ic"><use href="#s-cbox"/></svg></div>
    <div class="sb"><svg class="ic"><use href="#s-cblue"/></svg></div>
    <div class="sb sb-on"><svg class="ic"><use href="#s-nodesg"/></svg></div>
    <div class="sb"><svg class="ic"><use href="#s-nodesb"/></svg></div>
    <div class="sb sb-on"><svg class="ic"><use href="#s-line"/></svg></div>
    <div class="sb sb-on"><svg class="ic"><use href="#s-line2"/></svg></div>
    <div class="sb"><svg class="ic"><use href="#s-curve"/></svg></div>
    <div class="sb sb-on"><svg class="ic"><use href="#s-zig"/></svg></div>
    <div class="sb sb-on"><svg class="ic"><use href="#s-wave"/></svg></div>
    <div class="sb"><svg class="ic"><use href="#s-arc"/></svg></div>
    <div class="sb sb-on"><svg class="ic"><use href="#s-circ"/></svg></div>
    <div class="sb"><svg class="ic"><use href="#s-circ2"/></svg></div>
    <div class="sb sb-on"><svg class="ic"><use href="#s-plus"/></svg></div>
    <div class="sb sb-on"><svg class="ic"><use href="#s-line"/></svg></div>
    <div class="sb"><svg class="ic"><use href="#s-surf"/></svg></div>
    <div class="sb"><svg class="ic"><use href="#s-dia"/></svg></div>
    <div class="sb"><svg class="ic"><use href="#s-mesh"/></svg></div>
    <div class="sb-sep"></div>
    <div class="sb"><svg class="ic"><use href="#s-hook"/></svg></div>
    <div class="sb-sep0"></div>
  </div>

  <div class="main-row d-flex">
    <!-- graphics window -->
    <div class="view-wrap d-flex flex-column">
      <div class="doc-tabs d-flex">
        <div class="doc-tab d-flex align-items-center justify-content-end"><span>飞机起落架受力分析（案例）.prt</span><span class="doc-x">✕</span></div>
      </div>
      <div class="canvas-area">
        <svg class="part" viewBox="0 0 1080 930">
          <defs>
            <linearGradient id="boreG" x1="0" y1="0" x2="0" y2="1"><stop offset="0" stop-color="#3a86cf"/><stop offset=".55" stop-color="#54a8e6"/><stop offset="1" stop-color="#85e2fb"/></linearGradient>
          </defs>
          <g stroke="#17344f" stroke-width="3" stroke-linejoin="round">
            <path d="M120 68L165 82L190 50C210 30 255 28 280 55L532 298L535 345L640 395C680 415 700 440 693 468L690 495C670 510 620 510 580 500L500 440L395 380L130 85Z" fill="#63d3f5"/>
            <path d="M187 62C200 35 245 32 262 48C285 75 305 100 322 125L305 168L308 222L190 100Z" fill="#3f7fb8"/>
            <ellipse cx="243" cy="122" rx="24" ry="33" fill="#63d3f5"/>
            <ellipse cx="251" cy="122" rx="14" ry="25" fill="#fff" stroke="none"/>
            <path d="M335 165L430 235C435 250 420 262 405 262L360 260L325 215C318 190 325 170 335 165Z" fill="#fff"/>
            <path d="M335 165C325 170 318 190 325 215L345 240L330 195Z" fill="#3f9ad8"/>
            <path d="M395 345L532 300L535 342L405 378Z" fill="#46b4e0" stroke="none"/>
            <path d="M395 340L530 295M405 382L535 342" fill="none"/>
            <path d="M500 440L585 498L585 722L500 692Z" fill="#3f7fb8"/>
            <path d="M482 485L550 505L550 650L482 625Z" fill="#4a90d8"/>
            <path d="M482 625L550 650V668H500Z" fill="#63d3f5"/>
            <path d="M580 680L650 715C630 730 600 730 580 722Z" fill="#4a90d8"/>
            <path d="M500 445L585 495C620 505 670 500 693 468L693 490C670 510 615 515 585 505L500 480Z" fill="#4a90d8"/>
            <path d="M112 68C80 70 60 95 65 130C68 175 105 205 135 250C165 300 175 370 165 440C160 490 140 520 100 532C70 542 60 580 68 620C80 670 110 705 150 712L380 690L398 650L500 690V440L390 345L135 85C125 72 118 68 112 68Z" fill="#3f7fb8"/>
            <path d="M190 205C200 195 215 200 225 215C260 250 285 290 285 340V430L215 400C195 385 185 365 185 345Z" fill="#63d3f5"/>
            <path d="M208 210C245 245 283 295 283 345V410L222 385C212 375 208 360 208 345Z" fill="#fff" stroke="none"/>
            <path d="M303 310C320 310 330 340 325 360C312 350 305 330 303 310Z" fill="#63d3f5"/>
            <path d="M190 470L205 462L250 490L285 505C300 540 320 590 330 625L325 660L230 672C200 665 185 640 185 620Z" fill="#63d3f5"/>
            <path d="M210 478L248 490L285 505C298 540 315 590 325 630L322 655L235 662C215 655 205 640 205 620Z" fill="#3f7fb8"/>
            <path d="M212 478L250 488L215 492Z" fill="#fff" stroke="none"/>
            <ellipse cx="122" cy="160" rx="23" ry="36" transform="rotate(-12 122 160)" fill="#63d3f5"/>
            <ellipse cx="131" cy="160" rx="13" ry="27" transform="rotate(-12 131 160)" fill="#fff" stroke="none"/>
            <ellipse cx="125" cy="625" rx="23" ry="36" transform="rotate(-12 125 625)" fill="#63d3f5"/>
            <ellipse cx="133" cy="622" rx="12" ry="26" transform="rotate(-12 133 622)" fill="#fff" stroke="none"/>
            <ellipse cx="244" cy="585" rx="23" ry="36" transform="rotate(-12 244 585)" fill="#63d3f5"/>
            <ellipse cx="252" cy="582" rx="12" ry="26" transform="rotate(-12 252 582)" fill="#fff" stroke="none"/>
            <ellipse cx="395" cy="515" rx="70" ry="105" transform="rotate(-10 395 515)" fill="url(#boreG)"/>
            <path d="M372 460L370 490M415 455L416 470" stroke-width="2" fill="none"/>
            <ellipse cx="622" cy="440" rx="29" ry="14" fill="#fff"/>
          </g>
          <g stroke="#0b5416" stroke-width="3" stroke-linejoin="round">
            <path d="M550 505L700 480L965 735L1020 760V795L980 815L985 830L1020 850L1015 880L975 895L930 880L925 860L590 672L550 660L545 600L580 590V560L548 520Z" fill="#3fca3a"/>
            <path d="M560 505L705 480L960 735L925 745L650 560Z" fill="#48ea42"/>
            <path d="M605 565L640 570L925 745V860L610 670Z" fill="#37c034"/>
            <path d="M655 590L905 770V825L660 680Z" fill="#1b9128"/>
            <path d="M612 650L650 655L662 684L640 680Z" fill="#55e050"/>
            <path d="M662 684L905 822L905 827L660 692Z" fill="#b4f4b0" stroke-width="1"/>
            <path d="M930 770V800C945 815 1005 815 1020 795V765Z" fill="#3fca3a"/>
            <ellipse cx="975" cy="765" rx="45" ry="20" fill="#48ea42"/>
            <ellipse cx="973" cy="764" rx="21" ry="9" fill="#3fca3a"/>
            <path d="M930 855V880C945 900 1005 900 1020 875V850Z" fill="#3fca3a"/>
            <ellipse cx="975" cy="850" rx="45" ry="20" fill="#48ea42"/>
            <ellipse cx="973" cy="850" rx="21" ry="9" fill="#3fca3a"/>
          </g>
        </svg>
        <svg class="triad" viewBox="0 0 14 34">
          <path d="M-6 4l8-2 6 6-4 9-10-2z" fill="#c8ccca" stroke="#9a9e9c"/>
          <path d="M6 10l4-5M6 10l2 5" stroke="#666" fill="none"/>
          <path d="M1 24l5 7M6 24l-5 7" stroke="#b5514a" fill="none"/>
        </svg>
      </div>
    </div>

    <!-- assembly navigator -->
    <div class="nav-panel d-flex flex-column">
      <div class="nav-head d-flex align-items-center"><div class="nav-square"></div>装配导航器</div>
      <div class="col-head d-flex align-items-center">描述性部件名<div class="tri-up"></div></div>
      <div class="tree">
        <div class="tree-row d-flex align-items-center lvl-0"><div class="dot-h"></div><svg class="ic"><use href="#t-folder"/></svg>截面</div>
        <div class="tree-row d-flex align-items-center lvl-1 fw-bold"><div class="tree-exp">−</div><svg class="ck"><use href="#check"/></svg><svg class="ic"><use href="#t-asm"/></svg>飞机起落架受力分析（案例） （顺序：时间戳）</div>
        <div class="tree-row d-flex align-items-center lvl-2"><div class="dot-h"></div><svg class="ck"><use href="#check"/></svg><svg class="ic tint-y"><use href="#cube"/></svg>支架</div>
        <div class="tree-row d-flex align-items-center lvl-2"><div class="dot-h"></div><svg class="ck"><use href="#check"/></svg><svg class="ic tint-y"><use href="#cube"/></svg>销</div>
        <div class="tree-row d-flex align-items-center lvl-2"><div class="dot-h"></div><svg class="ck"><use href="#check"/></svg><svg class="ic tint-y"><use href="#cube"/></svg>杆</div>
      </div>
      <div class="hscroll d-flex align-items-center"><div class="hscroll-btn">&lt;</div><div class="hscroll-thumb"></div></div>
      <div class="split-line"></div>
      <div class="acc-row d-flex align-items-center">预览</div>
      <div class="acc-row d-flex align-items-center">相关性</div>
    </div>
  </div>

  <div class="status-bar d-flex align-items-center">
    <div class="st-chip"></div>
    <div class="st-win"></div>
  </div>
</div>

<!-- site watermark over the navigator -->
<div class="wm d-flex">
  <div class="wm-logo d-flex align-items-center justify-content-center">
    <svg width="56" height="58" viewBox="0 0 56 58">
      <path d="M5 15L19 12L29 38L35 25L44 27L32 55H20Z" fill="#262626"/>
      <path d="M8 20l12-3M10 25l12-3M12 30l12-3M14 35l12-3M16 40l10-2" stroke="#fff" stroke-width="2" fill="none"/>
      <g fill="#7cb22e" stroke="#4d7a1a" stroke-width=".8">
        <ellipse cx="29" cy="21" rx="6" ry="9" transform="rotate(-25 29 21)"/>
        <ellipse cx="38" cy="12" rx="7" ry="9" transform="rotate(15 38 12)"/>
        <ellipse cx="47" cy="20" rx="7" ry="8" transform="rotate(45 47 20)"/>
        <ellipse cx="39" cy="24" rx="8" ry="6"/>
      </g>
      <path d="M33 33L39 14M36 24l9-4M36 24l-6-6" stroke="#4d7a1a" fill="none"/>
    </svg>
  </div>
  <div class="flex-grow-1 overflow-hidden">
    <div class="wm-text">我要自學網</div>
    <div class="wm-url">WWW.51ZXW.NET</div>
  </div>
</div>

<script src="https://cdn.jsdelivr.net/npm/bootstrap@5.3.2/dist/js/bootstrap.bundle.min.js"></script>
</body>
</html>
